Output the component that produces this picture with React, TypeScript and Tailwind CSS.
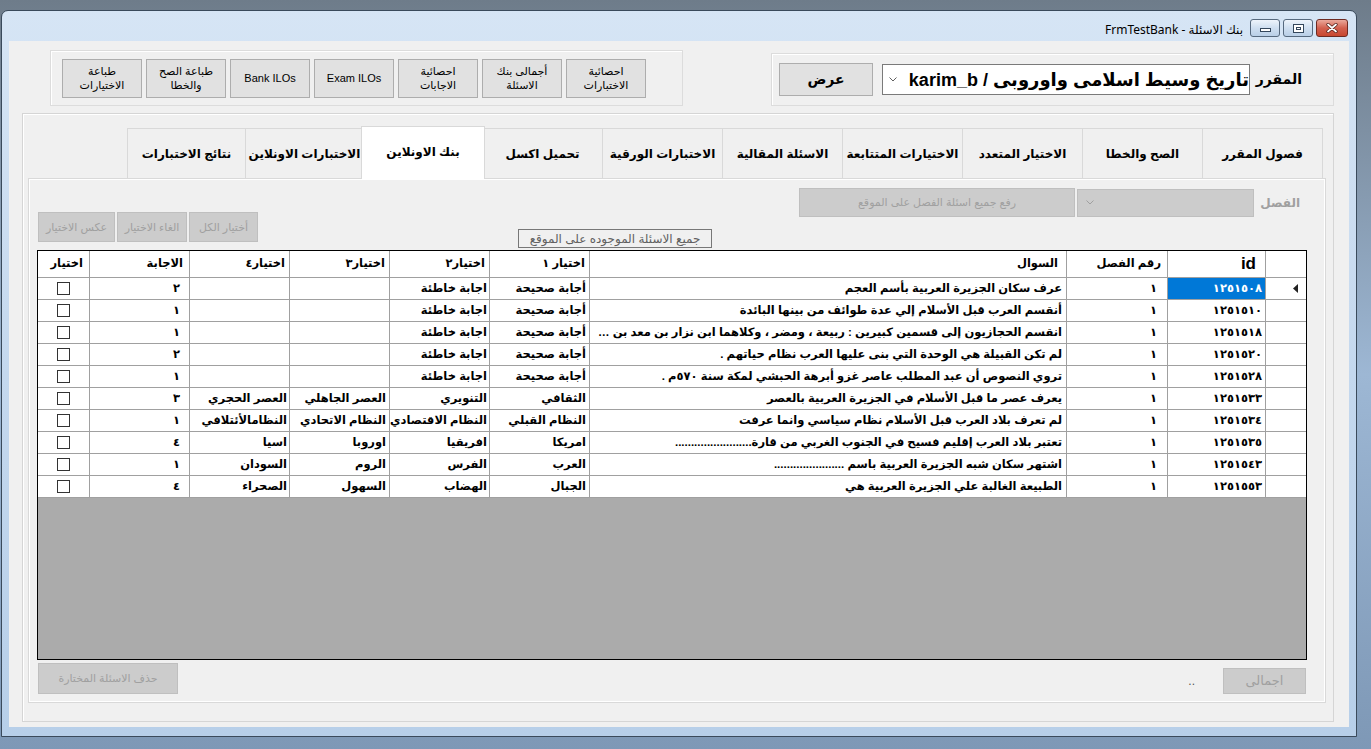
import React from "react";

const rows = [
  { id: "١٢٥١٥٠٨", q: "عرف سكان الجزيرة العربية بأسم العجم", c1: "أجابة صحيحة", c2: "اجابة خاطئة", c3: "", c4: "", a: "٢" },
  { id: "١٢٥١٥١٠", q: "أنقسم العرب قبل الأسلام إلي عدة طوائف من بينها البائدة", c1: "أجابة صحيحة", c2: "اجابة خاطئة", c3: "", c4: "", a: "١" },
  { id: "١٢٥١٥١٨", q: "انقسم الحجازيون  إلى قسمين كبيرين : ربيعة ، ومضر ، وكلاهما ابن نزار بن معد بن عدنان", c1: "أجابة صحيحة", c2: "اجابة خاطئة", c3: "", c4: "", a: "١" },
  { id: "١٢٥١٥٢٠", q: "لم تكن  القبيلة هي الوحدة التي بنى عليها العرب نظام حياتهم .", c1: "أجابة صحيحة", c2: "اجابة خاطئة", c3: "", c4: "", a: "٢" },
  { id: "١٢٥١٥٢٨", q: "تروي النصوص أن عبد المطلب عاصر غزو أبرهة الحبشي لمكة سنة ٥٧٠م .", c1: "أجابة صحيحة", c2: "اجابة خاطئة", c3: "", c4: "", a: "١" },
  { id: "١٢٥١٥٣٣", q: "يعرف عصر ما قبل الأسلام في الجزيرة العربية بالعصر", c1: "الثقافي", c2: "التنويري", c3: "العصر الجاهلي", c4: "العصر الحجري", a: "٣" },
  { id: "١٢٥١٥٣٤", q: "لم تعرف بلاد العرب قبل الأسلام نظام سياسي وانما عرفت", c1: "النظام القبلي", c2: "النظام الاقتصادي", c3: "النظام الاتحادي", c4: "النظامالأئتلافي", a: "١" },
  { id: "١٢٥١٥٣٥", q: "تعتبر بلاد العرب إقليم فسيح في الجنوب الغربي من قارة........................", c1: "امريكا", c2: "افريقيا", c3: "اوروبا", c4: "اسيا", a: "٤" },
  { id: "١٢٥١٥٤٣", q: "اشتهر سكان شبه الجزيرة العربية باسم ......................", c1: "العرب", c2: "الفرس", c3: "الروم", c4: "السودان", a: "١" },
  { id: "١٢٥١٥٥٣", q: "الطبيعة الغالبة علي الجزيرة العربية هي", c1: "الجبال", c2: "الهضاب", c3: "السهول", c4: "الصحراء", a: "٤" },
];

const topButtons = [
  ["احصائية", "الاختبارات"],
  ["أجمالى بنك", "الاسئلة"],
  ["احصائية", "الاجابات"],
  ["Exam ILOs"],
  ["Bank ILOs"],
  ["طباعة الصح", "والخطا"],
  ["طباعة", "الاختيارات"],
];

const tabs = [
  "فصول المقرر",
  "الصح والخطا",
  "الاختيار المتعدد",
  "الاختيارات المتتابعة",
  "الاسئلة المقالية",
  "الاختبارات الورقية",
  "تحميل اكسل",
  "بنك الاونلاين",
  "الاختبارات الاونلاين",
  "نتائج الاختبارات",
];

function Chevron({ color }: { color: string }) {
  return (
    <svg width="8" height="5" viewBox="0 0 8 5">
      <path d="M0.5 0.5 L4 4 L7.5 0.5" fill="none" stroke={color} strokeWidth="1" />
    </svg>
  );
}

const cell = "border-l border-b border-[#a0a0a0] h-[22px] flex items-center overflow-hidden whitespace-nowrap";

export default function App() {
  return (
    <div className="w-[1371px] h-[749px] overflow-hidden bg-gradient-to-b from-[#6e7c8a] via-[#9db7d4] to-[#7e98b6] font-[family-name:'Liberation_Sans','DejaVu_Sans',sans-serif] text-black">
      <div className="ml-[1px] mt-[10px] w-[1356px] h-[727px] rounded-t-[7px] border border-[#3a4a5b] bg-gradient-to-b from-[#d6e5f5] via-[#c4d8ee] to-[#b7cfe9]">
        {/* title bar */}
        <div className="h-[30px] flex items-start justify-end pr-[8px]" dir="ltr">
          <div className="mt-[10px] mr-[7px] text-[12px] font-[family-name:'Noto_Sans','DejaVu_Sans',sans-serif]" dir="rtl">
            بنك الاسئلة - FrmTestBank
          </div>
          <div className="flex gap-[3px] mt-[8px]">
            <div className="w-[30px] h-[18px] rounded-[3px] border border-[#56697e] bg-gradient-to-b from-[#eef4fb] via-[#cfdff0] to-[#b9cfe7] flex items-center justify-center">
              <div className="w-[11px] h-[4px] mt-[4px] bg-white border border-[#34475c]" />
            </div>
            <div className="w-[30px] h-[18px] rounded-[3px] border border-[#56697e] bg-gradient-to-b from-[#eef4fb] via-[#cfdff0] to-[#b9cfe7] flex items-center justify-center">
              <div className="w-[11px] h-[9px] border border-[#34475c] bg-white flex items-center justify-center">
                <div className="w-[5px] h-[3px] border border-[#34475c]" />
              </div>
            </div>
            <div className="w-[32px] h-[18px] rounded-[3px] border border-[#6d2a22] bg-gradient-to-b from-[#eaa89b] via-[#d2604f] to-[#c8472f] flex items-center justify-center">
              <svg width="12" height="10" viewBox="0 0 12 10">
                <path d="M2 1.5 L10 8.5 M10 1.5 L2 8.5" stroke="#4a1a14" strokeWidth="3.2" strokeLinecap="round" />
                <path d="M2 1.5 L10 8.5 M10 1.5 L2 8.5" stroke="#ffffff" strokeWidth="1.8" strokeLinecap="round" />
              </svg>
            </div>
          </div>
        </div>

        {/* client area */}
        <div className="mx-[7px] h-[686px] bg-[#f0f0f0]" dir="rtl">
          <div className="flex justify-between pl-[41px] pr-[15px] pt-[9px]">
            {/* course selector group */}
            <div className="w-[563px] h-[53px] mt-[3px] border border-[#dcdcdc] shadow-[inset_1px_1px_0_#fff] flex items-center pr-[31px] pl-[7px]">
              <span className="w-[37px] text-[14px] font-bold">المقرر</span>
              <div className="mr-[15px] w-[368px] h-[31px] bg-white border border-[#7a7a7a] flex items-center justify-between pl-[6px]">
                <span className="text-[18px] font-bold leading-none whitespace-nowrap">تاريخ وسيط اسلامى واوروبى / karim_b</span>
                <Chevron color="#606060" />
              </div>
              <button className="mr-[9px] w-[94px] h-[33px] bg-[#e1e1e1] border border-[#adadad] text-[14px] font-bold">عرض</button>
            </div>
            {/* reports group */}
            <div className="w-[633px] h-[56px] border border-[#dcdcdc] shadow-[inset_1px_1px_0_#fff] flex items-center gap-[4px] pr-[36px] pl-[11px]">
              {topButtons.map((b, i) => (
                <button key={i} className="w-[80px] h-[39px] bg-[#e1e1e1] border border-[#adadad] text-[11px] leading-[14px] flex flex-col items-center justify-center">
                  {b.map((l, j) => (
                    <span key={j} className="whitespace-nowrap">{l}</span>
                  ))}
                </button>
              ))}
            </div>
          </div>

          {/* outer panel */}
          <div className="ml-[13px] mr-[15px] mt-[7px] h-[609px] border border-[#d5d5d5] shadow-[inset_1px_1px_0_#fff] pt-[14px] pl-[5px] pr-[7px]">
            {/* tabs */}
            <div className="h-[50px] flex items-end pr-[3px]">
              {tabs.map((t, i) => {
                const sel = i === 7;
                return (
                  <div
                    key={t}
                    className={
                      sel
                        ? "relative z-10 w-[124px] -mx-[2px] h-[53px] -mb-[1px] bg-white border border-b-0 border-[#d9d9d9] flex items-center justify-center text-[12px] font-bold whitespace-nowrap pb-[3px]"
                        : i > 7
                        ? "w-[118px] h-[50px] border border-b-0 border-r-0 border-[#d9d9d9] flex items-center justify-center text-[12px] font-bold whitespace-nowrap"
                        : "w-[120px] h-[50px] border border-b-0 border-l-0 border-[#d9d9d9] flex items-center justify-center text-[12px] font-bold whitespace-nowrap"
                    }
                  >
                    {t}
                  </div>
                );
              })}
            </div>

            {/* tab page */}
            <div className="h-[525px] border border-[#d9d9d9] bg-[#f0f0f0] shadow-[inset_1px_1px_0_#fff,inset_-1px_-1px_0_#fff]">
              {/* toolbar */}
              <div className="h-[71px] flex pl-[9px] pr-[25px]" dir="ltr">
                <div className="self-end mb-[8px] flex gap-[2px]">
                  <button className="w-[77px] h-[30px] bg-[#cccccc] border border-[#bfbfbf] text-[11px] text-[#a0a0a0]" dir="rtl">عكس الاختيار</button>
                  <button className="w-[70px] h-[30px] bg-[#cccccc] border border-[#bfbfbf] text-[11px] text-[#a0a0a0]" dir="rtl">الغاء الاختيار</button>
                  <button className="w-[69px] h-[30px] bg-[#cccccc] border border-[#bfbfbf] text-[11px] text-[#a0a0a0]" dir="rtl">أختيار الكل</button>
                </div>
                <div className="self-end mb-[2px] ml-[260px] w-[194px] h-[19px] border border-[#777] flex items-center justify-center text-[12px] text-[#606060] whitespace-nowrap" dir="rtl">
                  جميع الاسئلة الموجوده على الموقع
                </div>
                <div className="self-start mt-[9px] ml-[87px] flex items-center">
                  <button className="w-[276px] h-[29px] bg-[#cccccc] border border-[#bfbfbf] text-[11px] text-[#a0a0a0]" dir="rtl">رفع جميع اسئلة الفصل على الموقع</button>
                  <div className="ml-[2px] w-[177px] h-[28px] bg-[#cccccc] border border-[#bfbfbf] flex items-center pl-[8px]">
                    <Chevron color="#a0a0a0" />
                  </div>
                  <span className="ml-[16px] w-[30px] text-[12px] font-bold text-[#a0a0a0] whitespace-nowrap" dir="rtl">الفصل</span>
                </div>
              </div>

              {/* data grid */}
              <div className="flex pl-[8px]" dir="ltr">
                <div className="w-[1270px] h-[410px] border border-black bg-[#ababab] flex flex-col">
                  <div className="grid grid-cols-[41px_98px_101px_477px_100px_100px_100px_100px_100px_51px] bg-white text-[11.5px] font-bold" dir="rtl">
                    <div className="border-l border-b border-[#a0a0a0] h-[27px]" />
                    <div className="border-l border-b border-[#a0a0a0] h-[27px] flex items-center pr-[9px] text-[17px] font-[family-name:'Liberation_Sans',sans-serif]">id</div>
                    <div className="border-l border-b border-[#a0a0a0] h-[27px] flex items-center pr-[6px]">رقم الفصل</div>
                    <div className="border-l border-b border-[#a0a0a0] h-[27px] flex items-center pr-[8px]">السوال</div>
                    <div className="border-l border-b border-[#a0a0a0] h-[27px] flex items-center pr-[4px]">اختيار ١</div>
                    <div className="border-l border-b border-[#a0a0a0] h-[27px] flex items-center pr-[4px]">اختيار٢</div>
                    <div className="border-l border-b border-[#a0a0a0] h-[27px] flex items-center pr-[4px]">اختيار٣</div>
                    <div className="border-l border-b border-[#a0a0a0] h-[27px] flex items-center pr-[4px]">اختيار٤</div>
                    <div className="border-l border-b border-[#a0a0a0] h-[27px] flex items-center pr-[6px]">الاجابة</div>
                    <div className="border-b border-[#a0a0a0] h-[27px] flex items-center pr-[6px]">اختيار</div>

                    {rows.map((r, i) => (
                      <React.Fragment key={r.id}>
                        <div className={`${cell} justify-start pr-[8px]`}>
                          {i === 0 && (
                            <svg width="5" height="9" viewBox="0 0 5 9">
                              <path d="M5 0 L0 4.5 L5 9 Z" fill="#222" />
                            </svg>
                          )}
                        </div>
                        <div className={`${cell} pr-[3px] ${i === 0 ? "bg-[#0078d7] text-white" : ""}`}>{r.id}</div>
                        <div className={`${cell} pr-[10px]`}>١</div>
                        <div className={`${cell} pr-[4px] pl-[3px]`}>
                          <span className="truncate block min-w-0 w-full">{r.q}</span>
                        </div>
                        <div className={`${cell} pr-[3px]`}>{r.c1}</div>
                        <div className={`${cell} pr-[2px]`}>{r.c2}</div>
                        <div className={`${cell} pr-[3px]`}>{r.c3}</div>
                        <div className={`${cell} pr-[2px]`}>{r.c4}</div>
                        <div className={`${cell} pr-[9px]`}>{r.a}</div>
                        <div className="border-b border-[#a0a0a0] h-[22px] flex items-center justify-center">
                          <div className="w-[13px] h-[13px] border border-[#333] bg-white" />
                        </div>
                      </React.Fragment>
                    ))}
                  </div>
                </div>
              </div>

              {/* bottom row */}
              <div className="flex items-start pl-[9px] pr-[19px]" dir="ltr">
                <button className="mt-[3px] w-[140px] h-[31px] bg-[#cccccc] border border-[#bfbfbf] text-[11px] text-[#a0a0a0]" dir="rtl">حذف الاسئلة المختارة</button>
                <div className="flex-1" />
                <span className="mt-[12px] mr-[28px] text-[12px] text-[#555]">..</span>
                <button className="mt-[8px] w-[83px] h-[26px] bg-[#cccccc] border border-[#bfbfbf] text-[13px] text-[#a0a0a0]" dir="rtl">اجمالى</button>
              </div>
            </div>
          </div>
        </div>
      </div>
    </div>
  );
}
